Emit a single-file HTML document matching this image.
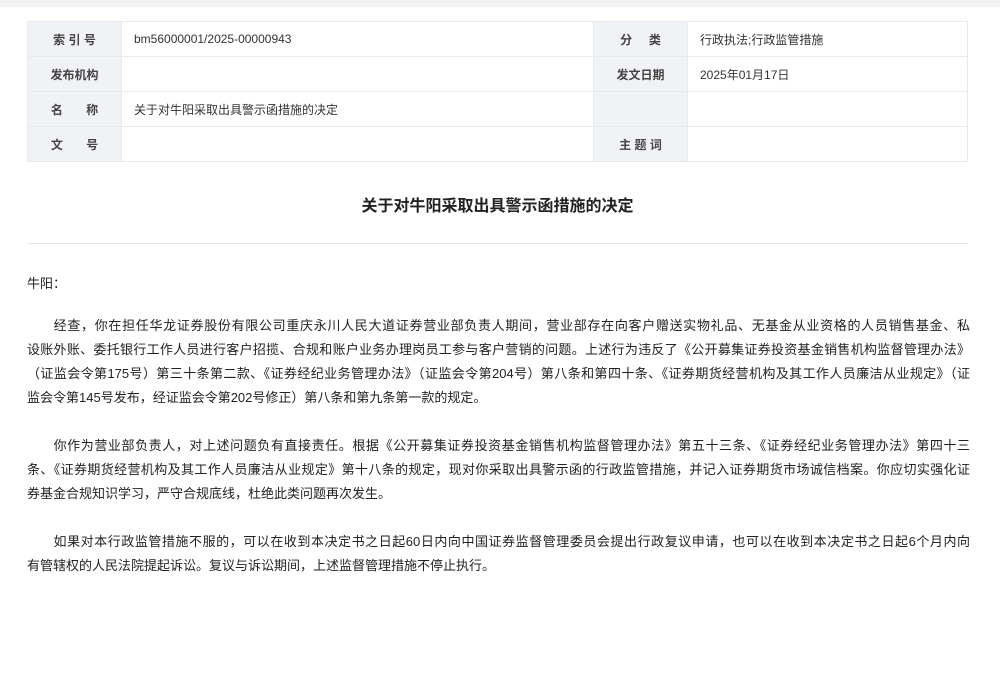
<!DOCTYPE html>
<html><head><meta charset="utf-8"><style>
body{margin:0;background:#fff;font-family:"Liberation Sans","Noto Sans CJK SC",sans-serif;color:#333;}
.top{height:7px;background:#f2f2f2;}
table{position:absolute;left:27px;top:21px;width:941px;border-collapse:collapse;font-size:12px;}
td{border:1px solid #e6e9ee;height:34px;padding:0;}
td.l{background:#f0f2f5;text-align:center;font-weight:bold;color:#444;width:93px;}
td.v{padding-left:12px;color:#333;}
h1{position:absolute;top:192px;left:0;width:995px;text-align:center;font-size:16px;margin:0;font-weight:bold;color:#222;}
.hr{position:absolute;left:27px;top:243px;width:941px;height:1px;background:#e6e6e6;}
.body{position:absolute;left:27px;top:272px;width:943px;font-size:13px;line-height:24px;color:#222;}
.j{display:block;white-space:nowrap;text-align:justify;text-align-last:justify;}
.n{display:block;white-space:nowrap;}
p{margin:0 0 24px 0;}
p.f{margin-bottom:18px;}
</style></head><body>
<div class="top"></div>
<table>
<tr><td class="l">索 引 号</td><td class="v" style="width:459px">bm56000001/2025-00000943</td><td class="l">分&nbsp;&nbsp;&nbsp;&nbsp;&nbsp;类</td><td class="v">行政执法;行政监管措施</td></tr>
<tr><td class="l">发布机构</td><td class="v"></td><td class="l">发文日期</td><td class="v">2025年01月17日</td></tr>
<tr><td class="l">名&nbsp;&nbsp;&nbsp;&nbsp;&nbsp;&nbsp;&nbsp;称</td><td class="v">关于对牛阳采取出具警示函措施的决定</td><td class="l"></td><td class="v"></td></tr>
<tr><td class="l">文&nbsp;&nbsp;&nbsp;&nbsp;&nbsp;&nbsp;&nbsp;号</td><td class="v"></td><td class="l">主 题 词</td><td class="v"></td></tr>
</table>
<h1>关于对牛阳采取出具警示函措施的决定</h1>
<div class="hr"></div>
<div class="body">
<p class="f">牛阳：</p>
<p><span class="j">&emsp;&emsp;经查，你在担任华龙证券股份有限公司重庆永川人民大道证券营业部负责人期间，营业部存在向客户赠送实物礼品、无基金从业资格的人员销售基金、私</span><span class="j">设账外账、委托银行工作人员进行客户招揽、合规和账户业务办理岗员工参与客户营销的问题。上述行为违反了《公开募集证券投资基金销售机构监督管理办法》</span><span class="j">（证监会令第175号）第三十条第二款、《证券经纪业务管理办法》（证监会令第204号）第八条和第四十条、《证券期货经营机构及其工作人员廉洁从业规定》（证</span><span class="n">监会令第145号发布，经证监会令第202号修正）第八条和第九条第一款的规定。</span></p>
<p><span class="j">&emsp;&emsp;你作为营业部负责人，对上述问题负有直接责任。根据《公开募集证券投资基金销售机构监督管理办法》第五十三条、《证券经纪业务管理办法》第四十三</span><span class="j">条、《证券期货经营机构及其工作人员廉洁从业规定》第十八条的规定，现对你采取出具警示函的行政监管措施，并记入证券期货市场诚信档案。你应切实强化证</span><span class="n">券基金合规知识学习，严守合规底线，杜绝此类问题再次发生。</span></p>
<p><span class="j">&emsp;&emsp;如果对本行政监管措施不服的，可以在收到本决定书之日起60日内向中国证券监督管理委员会提出行政复议申请，也可以在收到本决定书之日起6个月内向</span><span class="n">有管辖权的人民法院提起诉讼。复议与诉讼期间，上述监督管理措施不停止执行。</span></p>
</div>
</body></html>
